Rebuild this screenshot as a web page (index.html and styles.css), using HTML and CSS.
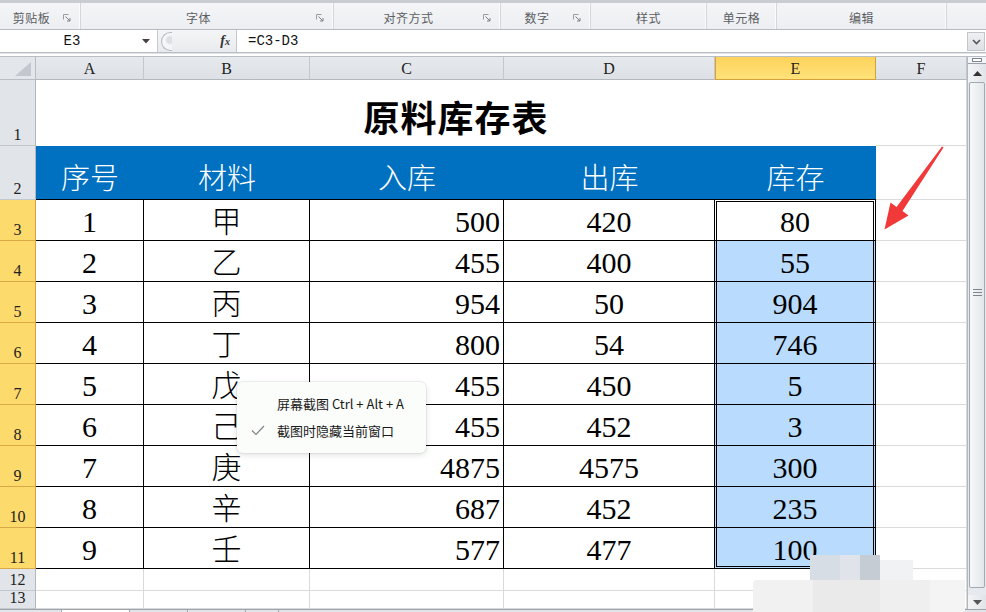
FILE: index.html
```html
<!DOCTYPE html>
<html lang="zh-CN">
<head>
<meta charset="utf-8">
<title>原料库存表</title>
<link rel="stylesheet" href="styles.css">
</head>
<body>
<div class="app">
  <div class="ribbon">
    <div class="grp"><span class="lbl">剪贴板</span><span class="launch"><svg width="8" height="8" viewBox="0 0 8 8"><path d="M0.5 0.5H5.5M0.5 0.5V5.5" stroke="#9a9ea4" fill="none"/><path d="M2.5 2.5L7 7M7 4V7H4" stroke="#7d8187" fill="none"/></svg></span></div>
    <div class="grp"><span class="lbl">字体</span><span class="launch"><svg width="8" height="8" viewBox="0 0 8 8"><path d="M0.5 0.5H5.5M0.5 0.5V5.5" stroke="#9a9ea4" fill="none"/><path d="M2.5 2.5L7 7M7 4V7H4" stroke="#7d8187" fill="none"/></svg></span></div>
    <div class="grp"><span class="lbl">对齐方式</span><span class="launch"><svg width="8" height="8" viewBox="0 0 8 8"><path d="M0.5 0.5H5.5M0.5 0.5V5.5" stroke="#9a9ea4" fill="none"/><path d="M2.5 2.5L7 7M7 4V7H4" stroke="#7d8187" fill="none"/></svg></span></div>
    <div class="grp"><span class="lbl">数字</span><span class="launch"><svg width="8" height="8" viewBox="0 0 8 8"><path d="M0.5 0.5H5.5M0.5 0.5V5.5" stroke="#9a9ea4" fill="none"/><path d="M2.5 2.5L7 7M7 4V7H4" stroke="#7d8187" fill="none"/></svg></span></div>
    <div class="grp"><span class="lbl">样式</span></div>
    <div class="grp"><span class="lbl">单元格</span></div>
    <div class="grp"><span class="lbl">编辑</span></div>
    <div class="grp last"></div>
  </div>

  <div class="fbar">
    <div class="namebox"><span class="nm">E3</span><span class="dd"><svg width="8" height="5" viewBox="0 0 8 5"><path d="M0 0H8L4 4.5Z" fill="#444"/></svg></span></div>
    <div class="fxzone">
      <span class="knob"></span>
      <span class="fx"><i>f</i><small>x</small></span>
    </div>
    <div class="finput">=C3-D3</div>
    <div class="fexp"><svg width="9" height="6" viewBox="0 0 9 6"><path d="M1 1L4.5 4.5L8 1" stroke="#555" stroke-width="1.6" fill="none"/></svg></div>
  </div>
  <div class="fgap"></div>

  <div class="sheetwrap">
    <div class="sheet">
      <div class="corner"><svg width="20" height="16" viewBox="0 0 20 16"><path d="M19 1V15H3Z" fill="#c4c8ce"/></svg></div>
      <div class="ch">A</div>
      <div class="ch">B</div>
      <div class="ch">C</div>
      <div class="ch">D</div>
      <div class="ch sel">E</div>
      <div class="ch">F</div>

      <div class="rh">1</div>
      <div class="title">原料库存表</div>
      <div class="c"></div>

      <div class="rh">2</div>
      <div class="hd">序号</div>
      <div class="hd">材料</div>
      <div class="hd">入库</div>
      <div class="hd">出库</div>
      <div class="hd">库存</div>
      <div class="c"></div>

      <div class="rh sel">3</div><div class="t">1</div><div class="t">甲</div><div class="t r">500</div><div class="t">420</div><div class="t act">80</div><div class="c"></div>
      <div class="rh sel">4</div><div class="t">2</div><div class="t">乙</div><div class="t r">455</div><div class="t">400</div><div class="t blue">55</div><div class="c"></div>
      <div class="rh sel">5</div><div class="t">3</div><div class="t">丙</div><div class="t r">954</div><div class="t">50</div><div class="t blue">904</div><div class="c"></div>
      <div class="rh sel">6</div><div class="t">4</div><div class="t">丁</div><div class="t r">800</div><div class="t">54</div><div class="t blue">746</div><div class="c"></div>
      <div class="rh sel">7</div><div class="t">5</div><div class="t">戊</div><div class="t r">455</div><div class="t">450</div><div class="t blue">5</div><div class="c"></div>
      <div class="rh sel">8</div><div class="t">6</div><div class="t">己</div><div class="t r">455</div><div class="t">452</div><div class="t blue">3</div><div class="c"></div>
      <div class="rh sel">9</div><div class="t">7</div><div class="t">庚</div><div class="t r">4875</div><div class="t">4575</div><div class="t blue">300</div><div class="c"></div>
      <div class="rh sel">10</div><div class="t">8</div><div class="t">辛</div><div class="t r">687</div><div class="t">452</div><div class="t blue">235</div><div class="c"></div>
      <div class="rh sel">11</div><div class="t">9</div><div class="t">壬</div><div class="t r">577</div><div class="t">477</div><div class="t blue">100</div><div class="c"></div>

      <div class="rh">12</div><div class="c"></div><div class="c"></div><div class="c"></div><div class="c"></div><div class="c"></div><div class="c"></div>
      <div class="rh">13</div><div class="c"></div><div class="c"></div><div class="c"></div><div class="c"></div><div class="c"></div><div class="c"></div>

      <div class="selbox"></div>
    </div>

    <div class="vscroll">
      <div class="split"><span></span></div>
      <div class="sbtn"><svg width="9" height="5" viewBox="0 0 9 5"><path d="M0 5H9L4.5 0Z" fill="#333"/></svg></div>
      <div class="thumb"><svg width="9" height="7" viewBox="0 0 9 7"><path d="M0 0.5H9M0 3.5H9M0 6.5H9" stroke="#7e858e"/></svg></div>
      <div class="sbtn down"><svg width="9" height="5" viewBox="0 0 9 5"><path d="M0 0H9L4.5 5Z" fill="#555"/></svg></div>
    </div>
  </div>
  <div class="tabs">
    <span class="tab a"></span><span class="tab b"></span><span class="tab c"></span><span class="tab d"></span><span class="tab e"></span>
  </div>

  <div class="menu">
    <div class="mi"><span class="chk"></span><span>屏幕截图 Ctrl + Alt + A</span></div>
    <div class="mi"><span class="chk"><svg width="14" height="11" viewBox="0 0 14 11"><path d="M1 5.5L5 9.5L13 1" stroke="#7a7f86" stroke-width="1.1" fill="none"/></svg></span><span>截图时隐藏当前窗口</span></div>
  </div>

  <svg class="arrow" width="80" height="100" viewBox="880 140 80 100">
    <polygon points="943.5,147.5 902.5,211 908.5,215.5 884.5,229.5 890.5,202.5 896.5,207 942,146.5" fill="#f2393a"/>
  </svg>

  <div class="mosaic">
    <span class="m1"></span><span class="m2"></span><span class="m3"></span><span class="m4"></span>
    <span class="m5"></span><span class="m6"></span><span class="m7"></span><span class="m8"></span>
  </div>
</div>
</body>
</html>
```

FILE: styles.css
```css
* { box-sizing: border-box; }
html, body { margin: 0; padding: 0; }
body {
  width: 986px;
  height: 612px;
  overflow: hidden;
  background: #fff;
  font-family: "Noto Sans CJK SC", "Noto Sans", sans-serif;
}
.app {
  position: relative;
  width: 986px;
  height: 612px;
  overflow: hidden;
}

/* Ribbon group label strip */
.ribbon {
  height: 30px;
  display: grid;
  grid-template-columns: 81px 253px 167px 90px 116px 70px 170px 1fr;
  border-top: 3px solid #c9ccd1;
  border-bottom: 1px solid #b6bbc2;
  background: linear-gradient(#f4f5f7, #eceef1);
}
.grp {
  display: flex;
  align-items: center;
  border-right: 1px solid #d3d7dc;
  box-shadow: inset -1px 0 0 #fbfbfc;
  padding-top: 3px;
}
.grp.last { border-right: 0; box-shadow: none; }
.lbl {
  flex: 1;
  text-align: center;
  font-size: 12px;
  color: #5b5e63;
  letter-spacing: 0.5px;
}
.launch {
  width: 17px;
  display: flex;
  align-items: center;
  justify-content: flex-start;
  padding-top: 1px;
}

/* Formula bar */
.fbar {
  height: 23px;
  display: flex;
  background: #fff;
  border-bottom: 1px solid #b9bec5;
}
.namebox {
  width: 158px;
  display: flex;
  align-items: center;
  border-right: 1px solid #c5c9cf;
}
.nm {
  flex: 1;
  text-align: center;
  font-family: "Liberation Mono", monospace;
  font-size: 14px;
  color: #111;
  padding-left: 2px;
}
.dd { width: 12px; display: flex; align-items: center; margin-right: 3px; }
.fxzone {
  width: 79px;
  display: flex;
  align-items: center;
  background: linear-gradient(#f4f5f6, #e9ebee);
  border-right: 1px solid #c5c9cf;
}
.knob {
  width: 11px;
  height: 19px;
  margin-left: 3px;
  border: 1px solid #b4b9c0;
  border-right: 0;
  border-radius: 10px 0 0 10px;
  background: radial-gradient(circle at 8px 7px, #dcdfe3 3px, #f5f6f7 5px);
}
.fx {
  margin-left: auto;
  margin-right: 6px;
  font-family: "Liberation Serif", serif;
  font-weight: bold;
  color: #333;
  font-size: 14px;
  line-height: 1;
}
.fx i { font-style: italic; }
.fx small { font-size: 10px; font-style: italic; }
.finput {
  flex: 1;
  display: flex;
  align-items: center;
  padding-left: 11px;
  font-family: "Liberation Mono", monospace;
  font-size: 14px;
  color: #111;
}
.fexp {
  width: 18px;
  margin: 2px 1px 1px 0;
  display: flex;
  align-items: center;
  justify-content: center;
  background: linear-gradient(#eef0f2, #dde0e4);
  border: 1px solid #c2c6cc;
}
.fgap {
  height: 4px;
  background: #fff;
  border-bottom: 1px solid #b9bec5;
  border-top: 1px solid #dfe2e6;
}

/* Sheet */
.sheetwrap {
  display: flex;
  height: 552px;
}
.sheet {
  position: relative;
  width: 967px;
  display: grid;
  grid-template-columns: 36px 108px 166px 194px 211px 161px 91px;
  grid-template-rows: 23px 66px 54px repeat(9, 41px) 22px 18px;
  font-family: "Liberation Serif", "Noto Sans CJK SC", serif;
  overflow: hidden;
}
.corner {
  background: #e3e6ea;
  border-right: 1px solid #b9bec5;
  border-bottom: 1px solid #b9bec5;
  display: flex;
  align-items: flex-end;
  justify-content: flex-end;
  padding: 0 3px 2px 0;
}
.ch {
  background: linear-gradient(#e6e9ed, #dde1e6);
  border-right: 1px solid #c3c8ce;
  border-bottom: 1px solid #b3b8bf;
  display: flex;
  align-items: center;
  justify-content: center;
  font-size: 16px;
  color: #222;
  padding-top: 1px;
}
.ch.sel {
  background: linear-gradient(#fdd35b, #ffe27a);
  border: 1px solid #d99f39;
  border-top: 0;
}
.rh {
  background: #e1e4e8;
  border-right: 1px solid #b3b8bf;
  border-bottom: 1px solid #c3c8ce;
  display: flex;
  align-items: flex-end;
  justify-content: center;
  font-size: 16px;
  line-height: 1;
  color: #222;
  padding-bottom: 2px;
}
.rh.sel {
  background: #fdda6c;
  border-right: 1px solid #d99f39;
  border-bottom: 1px solid #d9a945;
}
.c {
  border-right: 1px solid #dadada;
  border-bottom: 1px solid #dadada;
}
.title {
  grid-column: span 5;
  display: flex;
  align-items: center;
  justify-content: center;
  font-family: "Noto Sans CJK SC", sans-serif;
  font-weight: bold;
  font-size: 36px;
  letter-spacing: 1px;
  color: #000;
  padding-top: 6px;
}
.hd {
  background: #0070c0;
  color: #fff;
  border-bottom: 1px solid #000;
  display: flex;
  align-items: center;
  justify-content: center;
  font-family: "Noto Sans CJK SC", sans-serif;
  font-weight: 300;
  font-size: 29px;
  padding-top: 6px;
}
.t {
  border-right: 1px solid #000;
  border-bottom: 1px solid #000;
  display: flex;
  align-items: center;
  justify-content: center;
  font-size: 30px;
  font-weight: 300;
  color: #000;
  padding-top: 4px;
  line-height: 1;
}
.t.r { justify-content: flex-end; padding-right: 3px; }
.t.blue { background: #b9dcfe; }
.t.act { background: #fff; }
/* selection outline: absolutely positioned over grid area E3:E11 */
.selbox {
  position: absolute;
  grid-column: 6 / 7;
  grid-row: 4 / 13;
  top: -1px;
  left: -1px;
  right: 0;
  bottom: 0;
  border: 3px double #000;
  pointer-events: none;
}

/* Vertical scrollbar */
.vscroll {
  width: 19px;
  display: flex;
  flex-direction: column;
  background: #e6e9ed;
  border-left: 1px solid #b3b8bf;
}
.split {
  height: 7px;
  display: flex;
  align-items: center;
  justify-content: center;
  border-bottom: 1px solid #9aa1a9;
  background: #f4f5f7;
}
.split span {
  width: 10px;
  height: 4px;
  border: 1px solid #7d848c;
  background: #fff;
}
.sbtn {
  height: 18px;
  display: flex;
  align-items: center;
  justify-content: center;
  background: linear-gradient(90deg, #f3f4f6, #e1e4e8);
}
.sbtn.down { height: 14px; margin-top: auto; }
.thumb {
  flex: 0 0 506px;
  margin: 0 1px;
  border: 1px solid #a2a9b2;
  border-radius: 2px;
  background: linear-gradient(90deg, #f7f8f9, #e3e6ea);
  display: flex;
  align-items: center;
  justify-content: center;
  padding-bottom: 86px;
}

/* Sheet tabs strip */
.tabs {
  height: 3px;
  display: flex;
  background: #e1e4e8;
  border-top: 1px solid #9da4ac;
}
.tab { height: 3px; border-right: 1px solid #9da4ac; }
.tab.a { width: 62px; }
.tab.b { width: 68px; background: #fff; }
.tab.c { width: 58px; }
.tab.d { width: 58px; }
.tab.e { width: 33px; }

/* Context menu (overlay) */
.menu {
  position: absolute;
  left: 237px;
  top: 382px;
  width: 189px;
  height: 71px;
  background: #fbfdfb;
  border-radius: 6px;
  box-shadow: 0 0 0 1px rgba(0,0,0,0.05), 0 2px 6px rgba(0,0,0,0.12);
  padding-top: 8px;
  font-size: 13px;
  color: #1a1a1a;
}
.mi {
  height: 27px;
  display: flex;
  align-items: center;
}
.chk {
  width: 40px;
  display: flex;
  justify-content: flex-end;
  padding-right: 12px;
}

/* Red annotation arrow (overlay) */
.arrow {
  position: absolute;
  left: 880px;
  top: 140px;
}

/* Pixelated blur at bottom right (overlay) */
.mosaic {
  position: absolute;
  left: 753px;
  top: 553px;
  width: 212px;
  height: 59px;
}
.mosaic span { position: absolute; display: block; }
.m1 { left: 57px; top: 2px; width: 30px; height: 25px; background: #d7dde5; }
.m2 { left: 87px; top: 2px; width: 20px; height: 25px; background: #e0e4ea; }
.m3 { left: 107px; top: 2px; width: 20px; height: 25px; background: #c6ccd4; }
.m4 { left: 127px; top: 7px; width: 33px; height: 20px; background: #f0f2f4; }
.m5 { left: 0; top: 27px; width: 60px; height: 32px; background: #f1f1f1; border-radius: 4px 0 0 0; }
.m6 { left: 60px; top: 27px; width: 67px; height: 32px; background: #eaeaeb; }
.m7 { left: 127px; top: 27px; width: 50px; height: 32px; background: #efeff0; }
.m8 { left: 177px; top: 27px; width: 35px; height: 32px; background: #f4f4f4; }
```
